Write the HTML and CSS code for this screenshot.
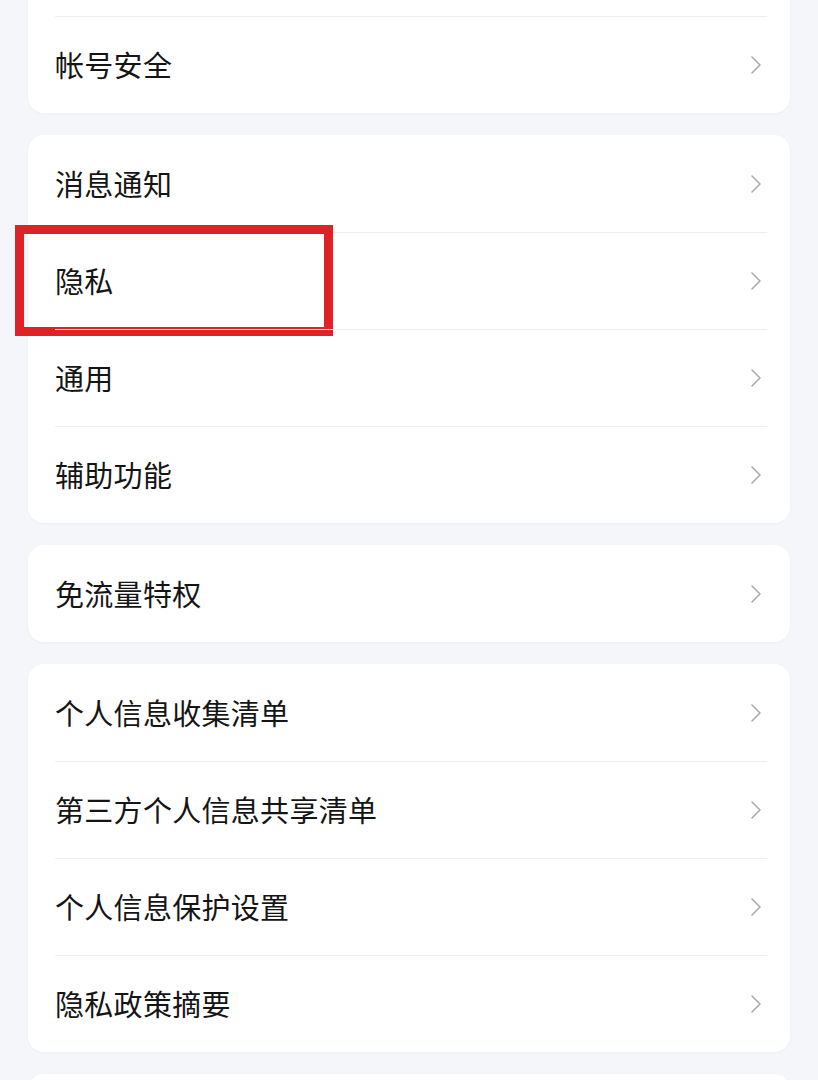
FILE: index.html
```html
<!DOCTYPE html>
<html lang="zh-CN">
<head>
<meta charset="utf-8">
<link rel="stylesheet" href="styles.css">
</head>
<body>
<div class="page">
  <section class="card card-top">
    <div class="row-stub"></div>
    <div class="row"><span class="label">帐号安全</span><svg class="chev" viewBox="0 0 12 20"><path d="M2 2 L10 10 L2 18"/></svg></div>
  </section>
  <section class="card">
    <div class="row"><span class="label">消息通知</span><svg class="chev" viewBox="0 0 12 20"><path d="M2 2 L10 10 L2 18"/></svg></div>
    <div class="row"><span class="label">隐私</span><svg class="chev" viewBox="0 0 12 20"><path d="M2 2 L10 10 L2 18"/></svg><div class="highlight"></div></div>
    <div class="row"><span class="label">通用</span><svg class="chev" viewBox="0 0 12 20"><path d="M2 2 L10 10 L2 18"/></svg></div>
    <div class="row"><span class="label">辅助功能</span><svg class="chev" viewBox="0 0 12 20"><path d="M2 2 L10 10 L2 18"/></svg></div>
  </section>
  <section class="card">
    <div class="row"><span class="label">免流量特权</span><svg class="chev" viewBox="0 0 12 20"><path d="M2 2 L10 10 L2 18"/></svg></div>
  </section>
  <section class="card">
    <div class="row"><span class="label">个人信息收集清单</span><svg class="chev" viewBox="0 0 12 20"><path d="M2 2 L10 10 L2 18"/></svg></div>
    <div class="row"><span class="label">第三方个人信息共享清单</span><svg class="chev" viewBox="0 0 12 20"><path d="M2 2 L10 10 L2 18"/></svg></div>
    <div class="row"><span class="label">个人信息保护设置</span><svg class="chev" viewBox="0 0 12 20"><path d="M2 2 L10 10 L2 18"/></svg></div>
    <div class="row"><span class="label">隐私政策摘要</span><svg class="chev" viewBox="0 0 12 20"><path d="M2 2 L10 10 L2 18"/></svg></div>
  </section>
  <section class="card card-bottom"></section>
</div>
</body>
</html>
```

FILE: styles.css
```css
html, body {
  margin: 0;
  padding: 0;
  background: #f5f6fa;
  overflow: hidden;
}
body {
  font-family: "Noto Sans CJK SC", "Noto Sans", sans-serif;
  color: #151515;
}
.page {
  display: flex;
  flex-direction: column;
  gap: 22px;
  padding: 0 28px;
  margin-top: -24px;
}
.card {
  background: #ffffff;
  border-radius: 16px;
  box-shadow: 0 1px 3px rgba(30, 40, 80, 0.04);
  display: flex;
  flex-direction: column;
}
.row-stub {
  height: 40px;
}
.row {
  position: relative;
  height: 97px;
  display: flex;
  align-items: center;
  justify-content: space-between;
  padding: 0 28px 0 27px;
  box-sizing: border-box;
}
.row + .row::before,
.row-stub + .row::before {
  content: "";
  position: absolute;
  top: 0;
  left: 27px;
  right: 23px;
  height: 1px;
  background: #efeff2;
}
.card-bottom {
  height: 60px;
}
.label {
  font-size: 29px;
  line-height: 1;
  letter-spacing: 0.3px;
  font-weight: 400;
}
.chev {
  width: 12px;
  height: 20px;
  fill: none;
  stroke: #ababab;
  stroke-width: 1.6;
  stroke-linecap: round;
  stroke-linejoin: round;
}
.highlight {
  position: absolute;
  left: -13px;
  top: -7px;
  width: 318px;
  height: 111px;
  border: 9px solid #dd2328;
  box-sizing: border-box;
  pointer-events: none;
}
```
